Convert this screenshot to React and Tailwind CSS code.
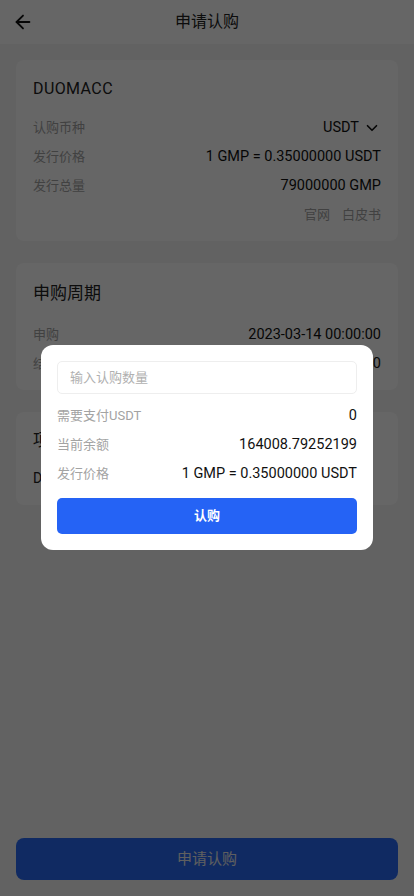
import React from 'react';
import { ArrowLeft, ChevronDown } from 'lucide-react';

const font = { fontFamily: 'Roboto, "Noto Sans CJK SC", sans-serif' };

function Row({ label, value, className = '' }) {
  return (
    <div className={`flex justify-between items-center h-[29px] ${className}`}>
      <span className="text-[13px] text-[#a3a3a3]">{label}</span>
      <span className="text-[14.5px] text-[#111]">{value}</span>
    </div>
  );
}

export default function App() {
  return (
    <div style={font} className="relative min-h-screen w-[414px] h-[896px] overflow-hidden bg-[#f6f6f6]">
      {/* Header */}
      <div className="h-[44px] bg-white flex items-center relative">
        <ArrowLeft className="absolute left-[12px] top-[11px] text-[#111]" size={22} strokeWidth={2} />
        <h1 className="w-full text-center text-[16px] text-[#222]">申请认购</h1>
      </div>

      <div className="px-4 pt-[16px] flex flex-col gap-[22px]">
        <div className="bg-white rounded-lg px-[17px] pt-[14px] pb-[12px]">
          <div className="text-[16px] text-[#222] tracking-wide h-[30px] flex items-center mb-[9px]">DUOMACC</div>
          <Row label="认购币种" value={<span className="flex items-center gap-1">USDT <ChevronDown size={18} strokeWidth={2.2} /></span>} />
          <Row label="发行价格" value="1 GMP = 0.35000000 USDT" />
          <Row label="发行总量" value="79000000 GMP" />
          <div className="flex justify-end gap-3 text-[13px] text-[#a3a3a3] h-[29px] items-center">
            <span>官网</span>
            <span>白皮书</span>
          </div>
        </div>

        <div className="bg-white rounded-lg px-[17px] pt-[16px] pb-[12px]">
          <div className="text-[17px] text-[#222] h-[30px] flex items-center mb-[11px]">申购周期</div>
          <Row label="申购" value="2023-03-14 00:00:00" />
          <Row label="结束" value="2023-03-21 00:00:00" />
        </div>

        <div className="bg-white rounded-lg px-[17px] pt-[14px] pb-[16px]">
          <div className="text-[17px] text-[#222] h-[30px] flex items-center mb-[12px]">项目介绍</div>
          <div className="text-[14px] text-[#222]">DUOMACC</div>
        </div>
      </div>

      {/* Bottom button */}
      <div className="absolute left-4 right-4 bottom-[16px]">
        <button className="w-full h-[42px] rounded-lg bg-[#286af5] text-[#eeeeee] text-[15px]">申请认购</button>
      </div>

      {/* Overlay */}
      <div className="absolute inset-0 bg-black/60 flex justify-center items-start pt-[345px]">
        <div className="w-[332px] bg-white rounded-xl px-4 pt-4 pb-4">
          <div className="h-[33px] border border-[#eeeeee] rounded-[5px] flex items-center px-3">
            <span className="text-[13px] text-[#b0b0b0]">输入认购数量</span>
          </div>
          <div className="mt-[7px]">
            <Row label="需要支付USDT" value="0" />
            <Row label="当前余额" value="164008.79252199" />
            <Row label="发行价格" value="1 GMP = 0.35000000 USDT" />
          </div>
          <button className="mt-[10px] w-full h-[36px] rounded-[5px] bg-[#2563f5] text-white text-[13px] font-bold">认购</button>
        </div>
      </div>
    </div>
  );
}
